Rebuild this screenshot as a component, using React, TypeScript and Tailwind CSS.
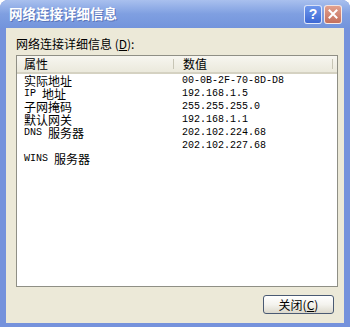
const rows: { label: string; value: string }[] = [
  { label: '实际地址', value: '00-0B-2F-70-8D-D8' },
  { label: 'IP 地址', value: '192.168.1.5' },
  { label: '子网掩码', value: '255.255.255.0' },
  { label: '默认网关', value: '192.168.1.1' },
  { label: 'DNS 服务器', value: '202.102.224.68' },
  { label: '', value: '202.102.227.68' },
  { label: 'WINS 服务器', value: '' },
]

// latin runs in a narrow mono, CJK in the CJK font, like SimSun's half-width look
function Mixed({ text }: { text: string }) {
  const parts = text.split(/([\u4e00-\u9fff]+)/).filter(Boolean)
  return (
    <div className="flex items-center h-[13px]">
      {parts.map((p, i) =>
        /[\u4e00-\u9fff]/.test(p) ? (
          <span key={i} className="font-['Noto_Sans_CJK_SC',sans-serif] text-[12px] leading-[13px]">
            {p}
          </span>
        ) : (
          <span key={i} className="font-['Liberation_Mono',monospace] text-[10px] leading-[13px] whitespace-pre">
            {p}
          </span>
        ),
      )}
    </div>
  )
}

export default function App() {
  return (
    <div className="w-[351px] h-[327px] bg-white">
      <div className="w-[350px] h-[327px] flex flex-col bg-[#7592dc] rounded-t-[8px] overflow-hidden">
        {/* Title bar */}
        <div className="h-[28px] shrink-0 flex items-center justify-between pl-[9px] pr-[8px] bg-gradient-to-b from-[#a9c0ee] via-[#7f9fe1] to-[#7394dc]">
          <span className="text-white font-bold text-[13.5px] leading-none font-['Noto_Sans_CJK_SC',sans-serif] [text-shadow:1px_1px_0_#5a74b8]">
            网络连接详细信息
          </span>
          <div className="flex gap-[2px]">
            <div className="w-[18px] h-[19px] rounded-[3px] border border-white/80 bg-gradient-to-b from-[#6f97ec] to-[#3d68d4] flex items-center justify-center text-white font-bold text-[14px] leading-none font-['Liberation_Sans',sans-serif]">
              ?
            </div>
            <div className="w-[18px] h-[19px] rounded-[3px] border border-white/80 bg-gradient-to-b from-[#e2a08e] to-[#c4705c] flex items-center justify-center">
              <svg width="10" height="10" viewBox="0 0 10 10">
                <path d="M1.5 1.5 L8.5 8.5 M8.5 1.5 L1.5 8.5" stroke="white" strokeWidth="2" strokeLinecap="square" />
              </svg>
            </div>
          </div>
        </div>

        {/* Body */}
        <div className="flex-1 ml-[6px] mr-[6px] mb-[4px] bg-[#ece9d8] flex flex-col pl-[10px] pr-[6px] pt-[9px]">
          <div className="text-[12px] leading-[14px] text-black font-['Noto_Sans_CJK_SC',sans-serif]">
            网络连接详细信息 (<span className="underline">D</span>):
          </div>

          {/* List view */}
          <div className="mt-[4px] h-[232px] border border-[#8f8f85] bg-white flex flex-col">
            <div className="h-[18px] shrink-0 flex bg-gradient-to-b from-[#f7f6f0] to-[#ebe9dc] border-b-[2px] border-[#d5d2c2]">
              <div className="w-[157px] flex items-center pl-[7px] border-r border-[#c7c5b5] my-[3px] text-[12px] leading-none font-['Noto_Sans_CJK_SC',sans-serif]">
                属性
              </div>
              <div className="w-[159px] flex items-center pl-[9px] border-r border-[#c7c5b5] my-[3px] text-[12px] leading-none font-['Noto_Sans_CJK_SC',sans-serif]">
                数值
              </div>
            </div>
            <div className="flex flex-col">
              {rows.map((r, i) => (
                <div key={i} className="h-[13px] flex items-center text-black">
                  <div className="w-[157px] pl-[7px] h-[13px]">
                    <Mixed text={r.label} />
                  </div>
                  <div className="pl-[8px] leading-[13px] h-[13px] font-['Liberation_Mono',monospace] text-[10px]">
                    {r.value}
                  </div>
                </div>
              ))}
            </div>
          </div>

          {/* Footer */}
          <div className="flex justify-end mt-[8px] pr-[4px]">
            <button className="w-[71px] h-[19px] rounded-[3px] border border-[#4a5a73] bg-gradient-to-b from-white via-[#f4f3ee] to-[#dcd9cc] text-[12px] leading-none text-black font-['Noto_Sans_CJK_SC',sans-serif] flex items-center justify-center">
              关闭(<span className="underline">C</span>)
            </button>
          </div>
        </div>
      </div>
    </div>
  )
}
